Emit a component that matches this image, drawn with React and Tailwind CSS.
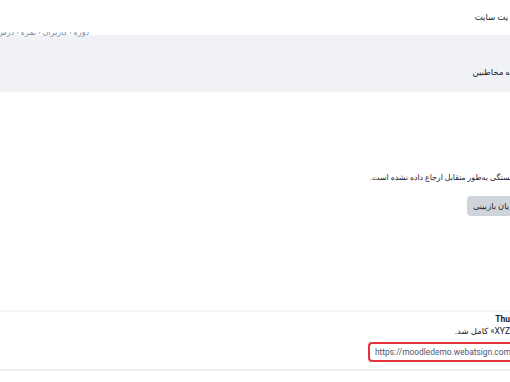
export default function App() {
  return (
    <div
      dir="rtl"
      className="w-[510px] h-[382px] overflow-hidden bg-white text-[#1d2125] text-[8.5px] font-['Roboto','DejaVu_Sans',sans-serif]"
    >
      {/* header */}
      <header className="h-[32px] pt-[2px] flex items-center bg-white">
        <span className="whitespace-nowrap pr-[2px]">یت سایت</span>
      </header>

      {/* breadcrumb, mostly hidden behind the header */}
      <div className="h-[5px] -mb-[2px] overflow-hidden flex items-end justify-end text-[#7d8aa0] whitespace-nowrap">
        <span className="leading-[9px] text-[8px] ml-[-3px]">دوره ‹ کاربران ‹ نمره ‹ درس</span>
      </div>

      {/* page header band */}
      <div className="h-[57px] bg-[#f0f2f5] pt-[31px]">
        <div className="leading-[12px] whitespace-nowrap">ه مخاطبین</div>
      </div>

      {/* main */}
      <main>
        <p className="mt-[80px] leading-[12px] text-[7.8px] whitespace-nowrap">
          {"\u200Dستگی به‌طور متقابل ارجاع داده نشده است."}
        </p>
        <div className="mt-[12px] flex">
          <button className="h-[20px] pl-[6px] pr-[1px] rounded-l-[4px] bg-[#ced4da] text-[8.3px] text-[#1d2125] whitespace-nowrap">
            یان بازبینی
          </button>
        </div>
      </main>

      {/* activity section */}
      <section className="mt-[94px] border-t-2 border-[#f4f4f4] pt-[1px] pb-[7px] border-b-2 border-b-[#efefef]">
        <div className="leading-[12px] whitespace-nowrap font-bold">
          <span dir="ltr">Thu</span>
        </div>
        <div className="leading-[12px] whitespace-nowrap">XYZ» کامل شد.</div>
        <div className="mt-[5px] flex">
          <div
            dir="ltr"
            className="w-[142px] h-[20px] border-2 border-r-0 border-[#e3343c] rounded-l-[4px] flex items-center pl-[5px] text-[8.4px] text-[#4a5872] whitespace-nowrap overflow-hidden"
          >
            https://moodledemo.webatsign.com/mod
          </div>
        </div>
      </section>
    </div>
  );
}
